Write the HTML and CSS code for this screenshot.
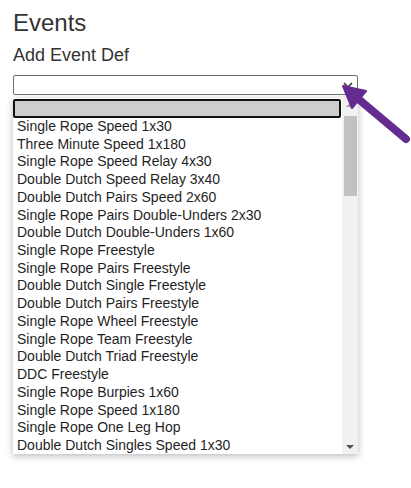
FILE: index.html
```html
<!DOCTYPE html>
<html>
<head>
<meta charset="utf-8">
<link rel="stylesheet" href="styles.css">
</head>
<body>
<div class="page">
  <h2 class="title">Events</h2>
  <h4 class="subtitle">Add Event Def</h4>
  <div class="select">
    <svg class="chev" width="10" height="7" viewBox="0 0 10 7"><path d="M1 1 L5 5 L9 1" fill="none" stroke="#333" stroke-width="1.6"/></svg>
  </div>
  <div class="dropdown">
    <div class="options">
      <div class="opt selected">&nbsp;</div>
      <div class="opt">Single Rope Speed 1x30</div>
      <div class="opt">Three Minute Speed 1x180</div>
      <div class="opt">Single Rope Speed Relay 4x30</div>
      <div class="opt">Double Dutch Speed Relay 3x40</div>
      <div class="opt">Double Dutch Pairs Speed 2x60</div>
      <div class="opt">Single Rope Pairs Double-Unders 2x30</div>
      <div class="opt">Double Dutch Double-Unders 1x60</div>
      <div class="opt">Single Rope Freestyle</div>
      <div class="opt">Single Rope Pairs Freestyle</div>
      <div class="opt">Double Dutch Single Freestyle</div>
      <div class="opt">Double Dutch Pairs Freestyle</div>
      <div class="opt">Single Rope Wheel Freestyle</div>
      <div class="opt">Single Rope Team Freestyle</div>
      <div class="opt">Double Dutch Triad Freestyle</div>
      <div class="opt">DDC Freestyle</div>
      <div class="opt">Single Rope Burpies 1x60</div>
      <div class="opt">Single Rope Speed 1x180</div>
      <div class="opt">Single Rope One Leg Hop</div>
      <div class="opt">Double Dutch Singles Speed 1x30</div>
    </div>
    <div class="scrollbar">
      <div class="sb-up"></div>
      <div class="sb-track"><div class="sb-thumb"></div></div>
      <div class="sb-down"></div>
    </div>
  </div>
</div>
<svg class="pointer" width="411" height="488" viewBox="0 0 411 488">
  <line x1="406" y1="139" x2="356" y2="97" stroke="#652b91" stroke-width="8" stroke-linecap="round"/>
  <polygon points="343,86 366,91 352,108" fill="#652b91" stroke="#652b91" stroke-width="2" stroke-linejoin="round"/>
</svg>
</body>
</html>
```
FILE: styles.css
```css
html, body {
  margin: 0;
  padding: 0;
  background: #fff;
}
body {
  font-family: "Liberation Sans", Arial, sans-serif;
  color: #333;
  position: relative;
  width: 411px;
  height: 488px;
  overflow: hidden;
}
.page {
  padding: 9px 0 0 13px;
}
.title {
  margin: 0;
  font-size: 24px;
  line-height: 28px;
  font-weight: normal;
}
.subtitle {
  margin: 8px 0 0 0;
  font-size: 18px;
  line-height: 21px;
  font-weight: normal;
}
.select {
  margin-top: 9px;
  width: 343px;
  height: 18px;
  border: 1px solid #6f6f6f;
  border-radius: 2px;
  position: relative;
}
.chev {
  position: absolute;
  right: 4px;
  top: 6px;
}
.dropdown {
  margin-top: 3px;
  width: 345px;
  height: 356px;
  background: #fff;
  box-shadow: 0 2px 7px rgba(0, 0, 0, 0.28);
  display: flex;
  overflow: hidden;
}
.options {
  flex: 1;
  padding-top: 1px;
  overflow: hidden;
}
.opt {
  height: 17.72px;
  line-height: 17.72px;
  font-size: 14px;
  color: #1f1f1f;
  padding-left: 4px;
  white-space: nowrap;
}
.opt.selected {
  height: 19px;
  box-sizing: border-box;
  background: #cecece;
  border: 2px solid #111;
  border-radius: 2px;
  margin-right: 1px;
}
.scrollbar {
  width: 16px;
  background: #f1f1f1;
  display: flex;
  flex-direction: column;
}
.sb-up, .sb-down {
  height: 16px;
  position: relative;
}
.sb-up::after, .sb-down::after {
  content: "";
  position: absolute;
  left: 4px;
  width: 0;
  height: 0;
  border-left: 4px solid transparent;
  border-right: 4px solid transparent;
}
.sb-up::after {
  top: 5px;
  border-bottom: 4px solid #a3a3a3;
}
.sb-down::after {
  top: 7px;
  border-top: 4px solid #505050;
}
.sb-track {
  flex: 1;
  padding: 2px 1px 0 2px;
}
.sb-thumb {
  height: 80px;
  background: #c1c1c1;
}
.pointer {
  position: absolute;
  left: 0;
  top: 0;
  pointer-events: none;
}
```
